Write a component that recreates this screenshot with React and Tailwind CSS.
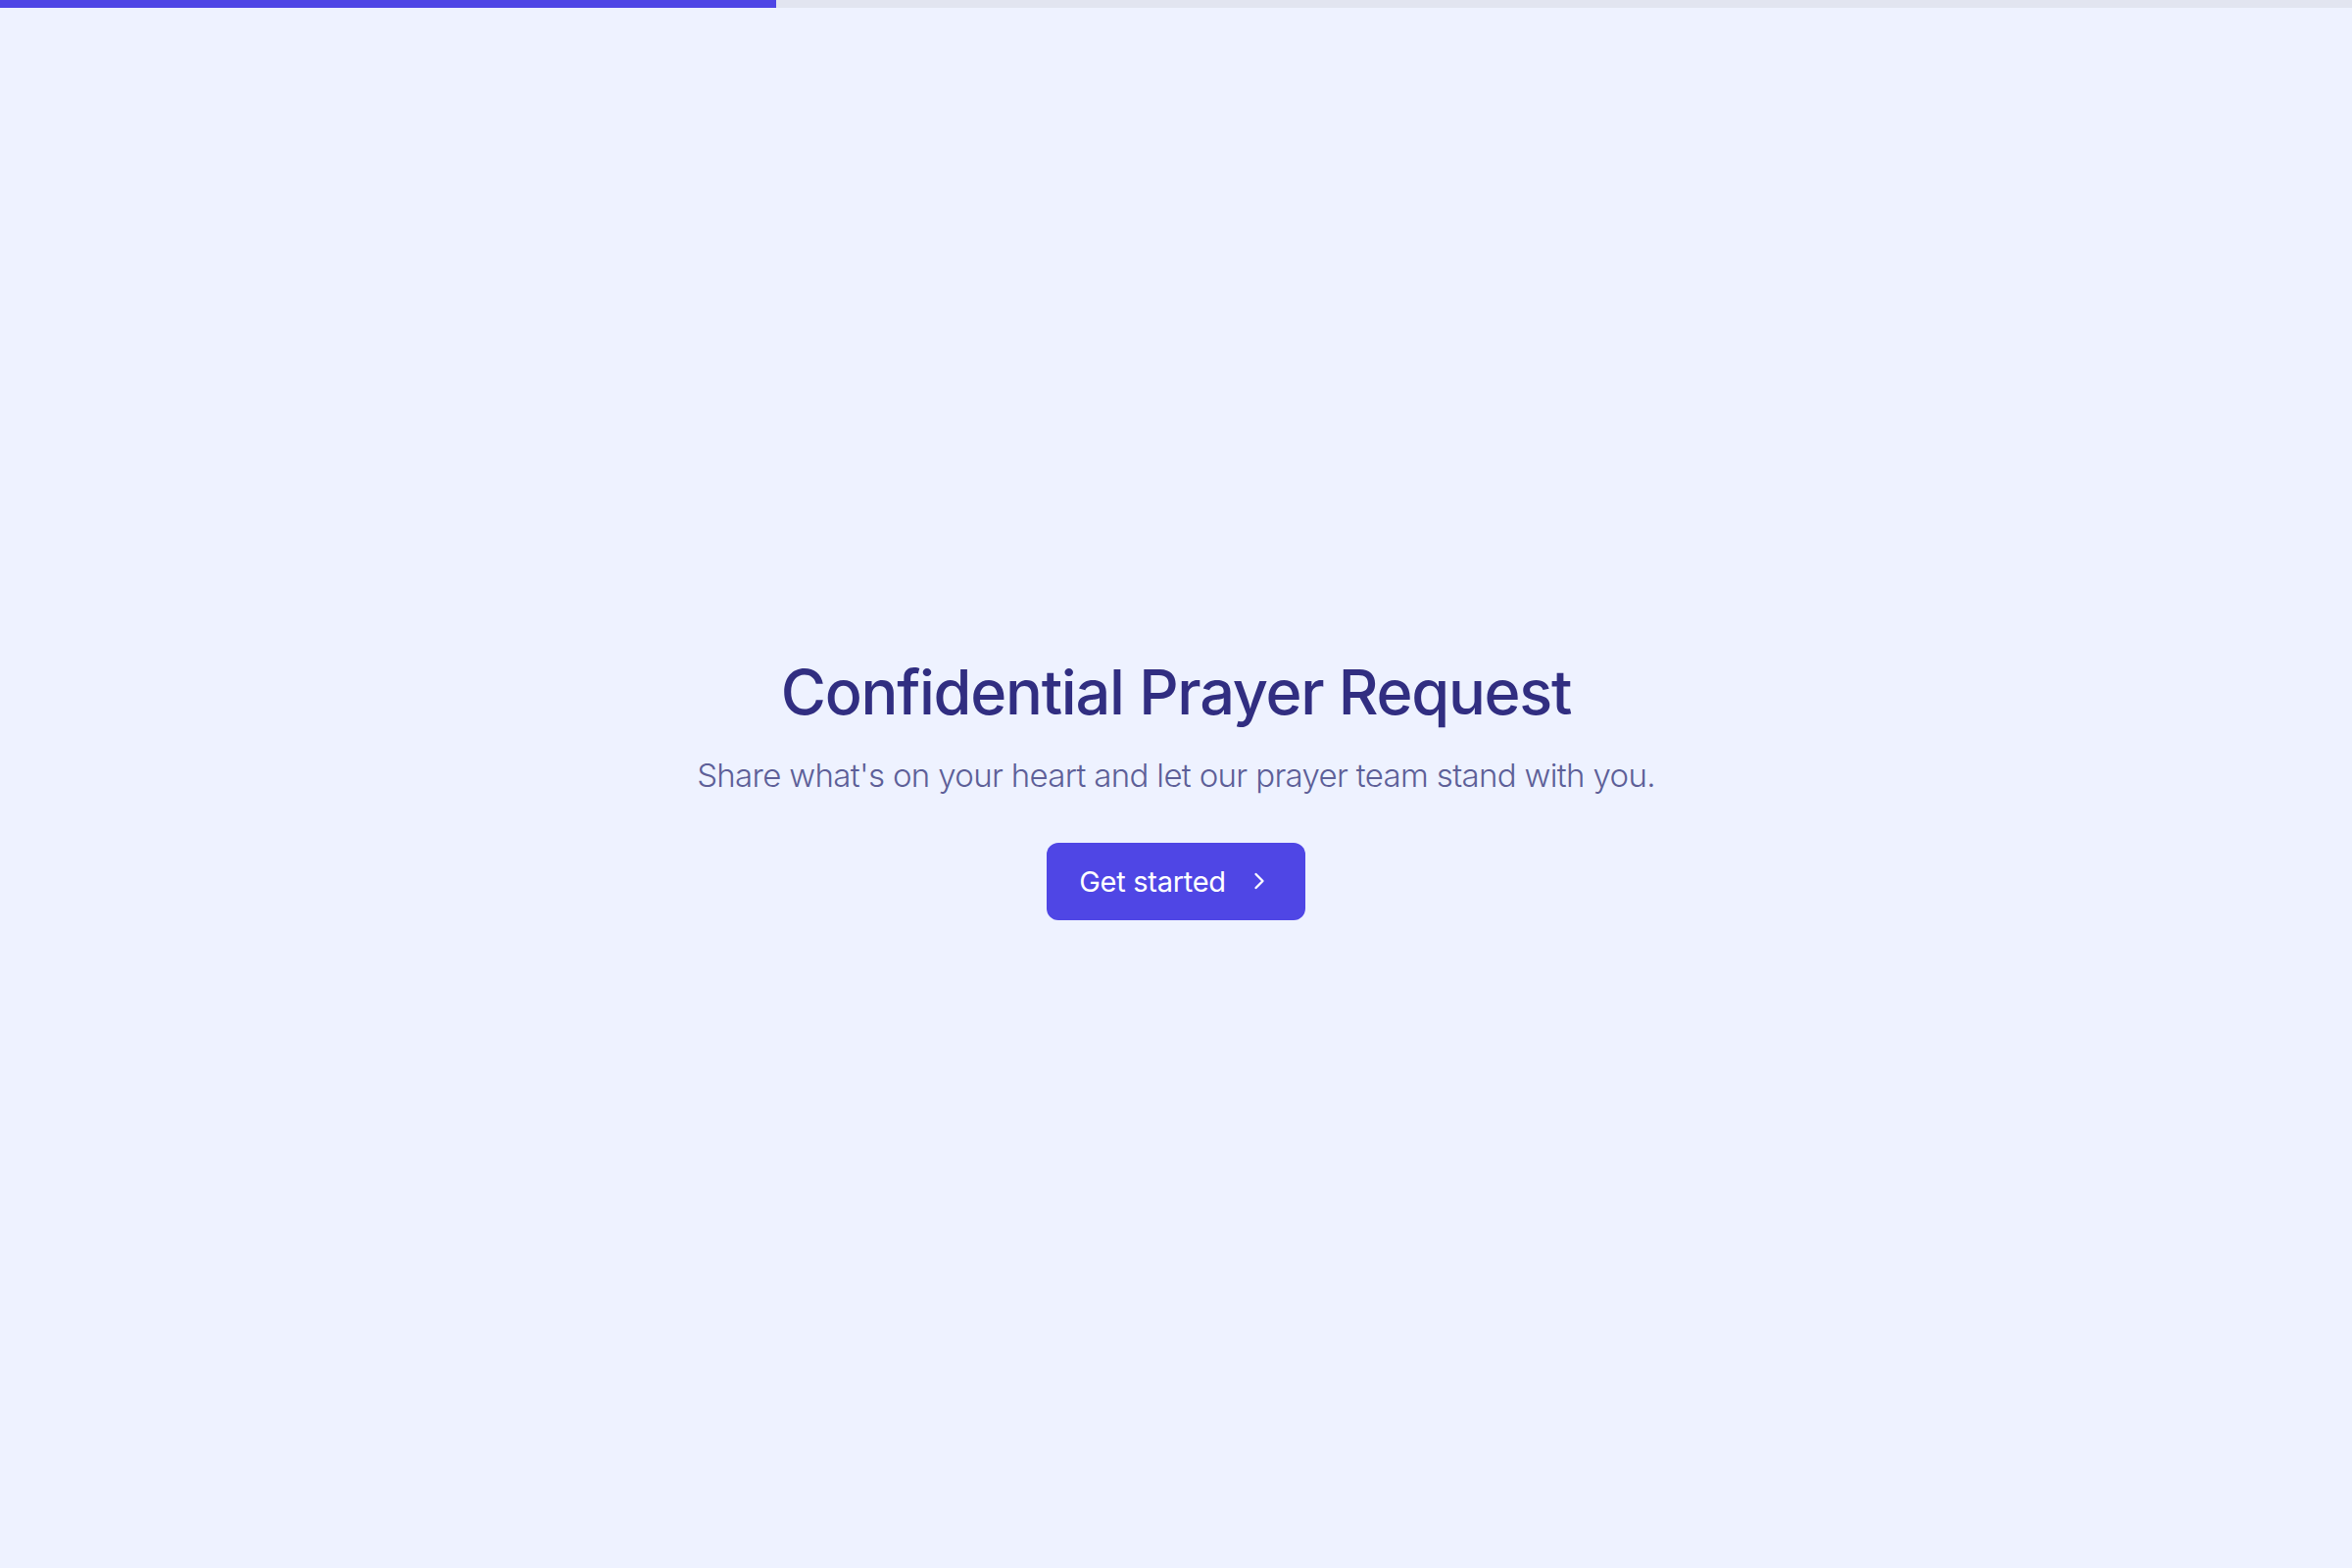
import { ChevronRight } from 'lucide-react';

const App = () => {
  const progress = 33;

  return (
    <div className="min-h-screen bg-[#eef2ff] flex flex-col" style={{ fontFamily: 'Inter, "Noto Sans", sans-serif' }}>
      {/* Progress bar */}
      <div className="h-2 w-full bg-[#e2e5f0]">
        <div className="h-full bg-[#4f46e5]" style={{ width: `${progress}%` }}></div>
      </div>

      <div className="flex-1 flex flex-col items-center justify-center text-center px-6">
        <h1 className="text-[63px] leading-[1.2] font-medium tracking-[-0.02em] text-[#312e81]">
          Confidential Prayer Request
        </h1>
        <p className="mt-[23px] text-[33px] leading-[1.4] font-light tracking-[-0.02em] text-[#5d5f98]">
          Share what's on your heart and let our prayer team stand with you.
        </p>
        <button className="mt-[46px] h-[79px] w-[264px] rounded-xl bg-[#4f46e5] text-white text-[29px] font-normal tracking-[-0.01em] flex items-center justify-center gap-5">
          Get started
          <ChevronRight className="w-7 h-7" strokeWidth={2} />
        </button>
      </div>
    </div>
  );
};

export default App;
